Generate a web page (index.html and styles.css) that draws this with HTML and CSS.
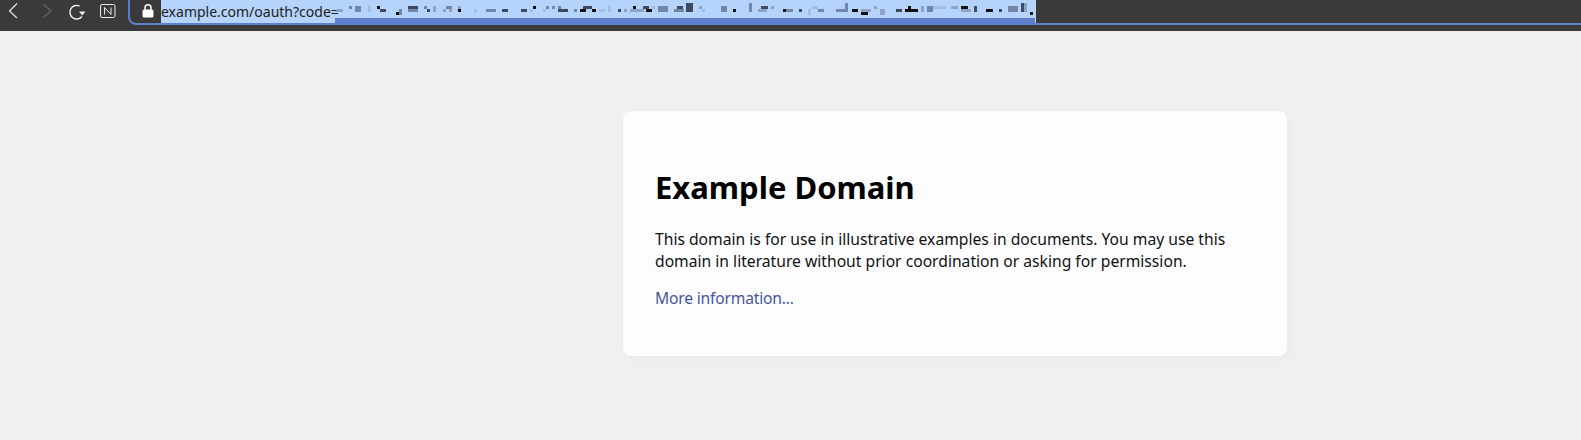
FILE: index.html
```html
<!DOCTYPE html>
<html lang="en">
<head>
<meta charset="utf-8">
<title>Example Domain</title>
<link rel="stylesheet" href="styles.css">
</head>
<body>
<header class="toolbar">
  <nav class="nav">
    <svg class="icon back" width="16" height="22" viewBox="0 0 16 22"><path d="M11 3.500 3.500 11 11 18" fill="none" stroke="#e8e8e8" stroke-width="1.200"/></svg>
    <svg class="icon forward" width="16" height="22" viewBox="0 0 16 22"><path d="M4.500 4.500 12 11 4.500 17.500" fill="none" stroke="#666" stroke-width="1.200"/></svg>
    <svg class="icon reload" width="18" height="22" viewBox="0 0 18 22"><path d="M14 16.500A6.800 6.800 0 1 1 11.500 6" fill="none" stroke="#eee" stroke-width="1.400"/><path d="M11 11.500h6.500L14.200 15.500z" fill="#eee"/></svg>
    <svg class="icon notion" width="16" height="22" viewBox="0 0 16 22"><rect x=".5" y="4.500" width="14.500" height="13" rx="1.500" fill="none" stroke="#e8e8e8"/><path d="M4.500 14.500V7.500l6.500 7V7.500" fill="none" stroke="#e8e8e8"/></svg>
  </nav>
  <div class="address">
    <svg class="lock" width="12" height="14" viewBox="0 0 12 14"><path d="M3 6V3.800a3 3 0 0 1 6 0V6" fill="none" stroke="#fff" stroke-width="1.500"/><rect x=".5" y="5.500" width="11" height="8" rx="1.500" fill="#fff"/></svg>
    <div class="url"><span class="url-text">example.com/oauth?code=</span>
      <svg class="mosaic" width="703" height="23" viewBox="332 0 703 23" shape-rendering="crispEdges">
        <rect x="333" y="18" width="700" height="5" fill="#5b7fcc"/>
        <g fill="#111">
          <rect x="375" y="6" width="3" height="3"/><rect x="394" y="12" width="3" height="3"/><rect x="456" y="9" width="3" height="3"/><rect x="531" y="6" width="3" height="3"/><rect x="578" y="9" width="6" height="3"/><rect x="590" y="9" width="4" height="3"/><rect x="631" y="6" width="3" height="3"/><rect x="644" y="9" width="6" height="3"/><rect x="731" y="9" width="3" height="3"/><rect x="781" y="9" width="3" height="3"/><rect x="850" y="9" width="6" height="3"/><rect x="859" y="12" width="7" height="3"/><rect x="903" y="9" width="13" height="3"/><rect x="906" y="6" width="3" height="3"/><rect x="959" y="6" width="7" height="3"/><rect x="984" y="9" width="7" height="3"/><rect x="1028" y="12" width="3" height="3"/>
        </g>
        <g fill="#3f4a62">
          <rect x="378" y="9" width="6" height="3"/><rect x="406" y="6" width="10" height="3"/><rect x="425" y="9" width="3" height="3"/><rect x="500" y="9" width="6" height="3"/><rect x="519" y="9" width="6" height="3"/><rect x="556" y="9" width="10" height="3"/><rect x="581" y="6" width="9" height="3"/><rect x="616" y="9" width="3" height="3"/><rect x="641" y="6" width="6" height="3"/><rect x="675" y="6" width="6" height="3"/><rect x="684" y="3" width="7" height="9"/><rect x="759" y="6" width="7" height="3"/><rect x="797" y="9" width="3" height="3"/><rect x="894" y="9" width="6" height="3"/><rect x="972" y="6" width="3" height="6"/><rect x="1019" y="3" width="3" height="9"/><rect x="997" y="9" width="3" height="3"/>
        </g>
        <g fill="#7486a8">
          <rect x="347" y="6" width="3" height="3"/><rect x="353" y="6" width="6" height="6"/><rect x="397" y="9" width="3" height="6"/><rect x="406" y="9" width="10" height="3"/><rect x="422" y="6" width="3" height="3"/><rect x="444" y="6" width="6" height="3"/><rect x="484" y="9" width="10" height="3"/><rect x="544" y="6" width="3" height="3"/><rect x="550" y="6" width="3" height="3"/><rect x="556" y="6" width="3" height="3"/><rect x="572" y="9" width="3" height="3"/><rect x="656" y="6" width="10" height="6"/><rect x="672" y="9" width="10" height="3"/><rect x="719" y="6" width="6" height="6"/><rect x="747" y="3" width="3" height="9"/><rect x="784" y="9" width="7" height="3"/><rect x="816" y="9" width="6" height="3"/><rect x="834" y="9" width="12" height="3"/><rect x="843" y="3" width="3" height="6"/><rect x="925" y="6" width="6" height="6"/><rect x="1006" y="6" width="10" height="6"/>
        </g>
        <g fill="#8fa3c6">
          <rect x="334" y="9" width="7" height="3"/><rect x="431" y="6" width="3" height="6"/><rect x="441" y="9" width="3" height="3"/><rect x="447" y="9" width="3" height="3"/><rect x="456" y="6" width="3" height="3"/><rect x="622" y="9" width="3" height="3"/><rect x="628" y="9" width="14" height="3"/><rect x="697" y="6" width="3" height="3"/><rect x="756" y="9" width="9" height="3"/><rect x="769" y="6" width="3" height="3"/><rect x="859" y="9" width="10" height="3"/><rect x="872" y="6" width="3" height="3"/><rect x="878" y="9" width="5" height="6"/><rect x="919" y="6" width="3" height="6"/><rect x="949" y="6" width="7" height="3"/><rect x="959" y="9" width="10" height="3"/><rect x="1022" y="3" width="3" height="9"/>
        </g>
        <g fill="#a3bde2">
          <rect x="366" y="6" width="3" height="6"/><rect x="472" y="9" width="3" height="3"/><rect x="528" y="9" width="3" height="3"/><rect x="541" y="9" width="3" height="3"/><rect x="597" y="9" width="6" height="3"/><rect x="606" y="6" width="3" height="6"/><rect x="650" y="6" width="3" height="3"/><rect x="700" y="9" width="3" height="3"/><rect x="806" y="9" width="3" height="6"/><rect x="810" y="6" width="6" height="3"/><rect x="931" y="6" width="13" height="3"/>
        </g>
      </svg>
    </div>
  </div>
</header>
<main class="page">
  <article class="card">
    <h1>Example Domain</h1>
    <p>This domain is for use in illustrative examples in documents. You may use this domain in literature without prior coordination or asking for permission.</p>
    <p class="more"><a href="#">More information...</a></p>
  </article>
</main>
</body>
</html>
```
FILE: styles.css
```css
* { box-sizing: border-box; }
html, body { margin: 0; height: 440px; overflow: hidden; }
body { background: #f0f0f2; font-family: "Noto Sans", "Noto Sans CJK KR", sans-serif; }
.toolbar { height: 31px; background: #3a3a3a; display: flex; }
.nav { width: 127px; height: 22px; display: flex; padding-left: 6px; flex: none; }
.forward { margin-left: 17px; }
.reload { margin-left: 13px; }
.notion { margin-left: 14px; }
.address { flex: 1; height: 25px; margin-left: 1px; border: 2px solid #5b7fcc; border-top: 0; border-right: 0; border-bottom-left-radius: 8px; display: flex; padding-left: 12px; }
.lock { margin-top: 4px; flex: none; }
.url { margin-left: 7px; width: 875px; height: 23px; background: #b5d3fb; display: flex; }
.url-text { width: 173px; color: #222; font-size: 14px; line-height: 24px; white-space: nowrap; }
.mosaic { display: block; flex: none; }
.page { display: flex; justify-content: center; padding: 80px 0 0 329px; }
.card { width: 664px; height: 245px; background: #fdfdff; border-radius: 8px; padding: 32px; box-shadow: 2px 3px 7px 2px rgba(0,0,0,.02); }
h1 { margin: 21px 0 0; font-size: 31px; line-height: 46px; font-weight: 700; color: #000; }
p { margin: 18px 0 0; font-size: 15.660px; line-height: 22px; color: #111; }
.more { margin-top: 15px; }
a { color: #47559c; text-decoration: none; letter-spacing: -.2px; }
```
